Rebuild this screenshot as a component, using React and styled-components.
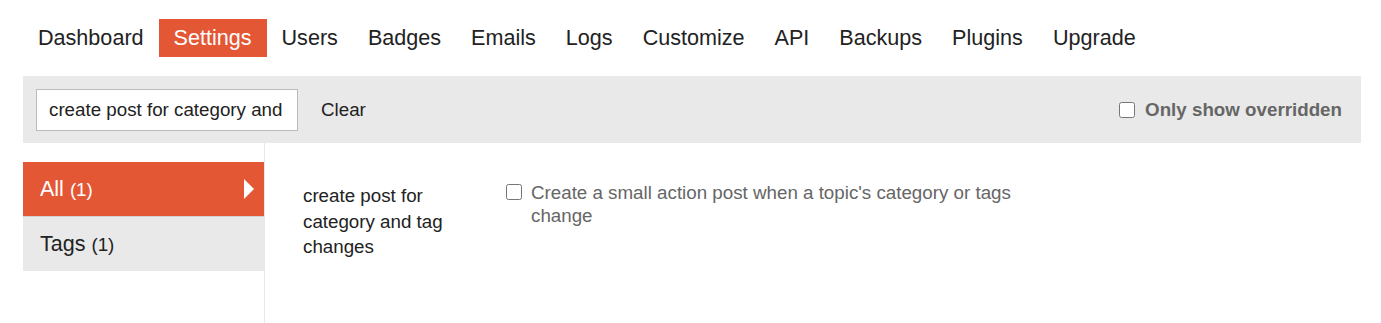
import React from 'react';
import styled, { createGlobalStyle } from 'styled-components';

const GlobalStyle = createGlobalStyle`
  body {
    margin: 0;
    background: #fff;
    font-family: "Liberation Sans", Arial, Helvetica, sans-serif;
    font-size: 18.75px;
    color: #222;
  }
`;

const Page = styled.div`
  padding: 19px 20px 0 23px;
`;

const NavPills = styled.ul`
  display: flex;
  list-style: none;
  margin: 0 0 19px;
  padding: 0;
`;

const Pill = styled.li`
  font-size: 21.58px;
  line-height: 24px;
  padding: 7px 15px;
  background: ${(p) => (p.active ? '#e45735' : 'transparent')};
  color: ${(p) => (p.active ? '#fff' : '#222')};
  cursor: pointer;
`;

const FilterBar = styled.div`
  display: flex;
  align-items: center;
  background: #e9e9e9;
  height: 67px;
  padding: 0 19px 0 13px;
  box-sizing: border-box;
`;

const SearchInput = styled.input`
  width: 262px;
  height: 42px;
  box-sizing: border-box;
  border: 1px solid #bbb;
  padding: 0 12px;
  font-family: inherit;
  font-size: 18.75px;
  color: #222;
  background: #fff;
  outline: none;
`;

const ClearButton = styled.button`
  border: none;
  background: transparent;
  font-family: inherit;
  font-size: 18.75px;
  color: #222;
  padding: 0;
  margin-left: 23px;
  cursor: pointer;
`;

const Toggle = styled.label`
  margin-left: auto;
  display: flex;
  align-items: center;
  gap: 10px;
  font-weight: bold;
  color: #666;
  font-size: 18.75px;
`;

const Check = styled.input`
  width: 16px;
  height: 16px;
  margin: 0;
  accent-color: #e45735;
`;

const Body = styled.div`
  display: flex;
  min-height: 180px;
`;

const SideNav = styled.ul`
  list-style: none;
  margin: 19px 0 0;
  padding: 0;
  width: 241px;
  align-self: flex-start;
`;

const SideItem = styled.li`
  display: flex;
  align-items: center;
  justify-content: space-between;
  height: 54px;
  padding: 0 10px 0 17px;
  font-size: 21.5px;
  background: ${(p) => (p.active ? '#e45735' : '#e9e9e9')};
  color: ${(p) => (p.active ? '#fff' : '#222')};
  border-bottom: ${(p) => (p.active ? '1px solid #d2d2d2' : 'none')};
`;

const Count = styled.span`
  font-size: 18.75px;
`;

const Arrow = styled.span`
  width: 0;
  height: 0;
  border-top: 10px solid transparent;
  border-bottom: 10px solid transparent;
  border-left: 10px solid #fff;
`;

const Content = styled.div`
  flex: 1;
  border-left: 1px solid #e9e9e9;
  padding: 38px 0 0 38px;
`;

const SettingRow = styled.div`
  display: grid;
  grid-template-columns: 203px 520px;
`;

const SettingLabel = styled.div`
  width: 170px;
  line-height: 25.5px;
  padding-top: 2px;
  color: #222;
`;

const SettingValue = styled.label`
  display: flex;
  align-items: flex-start;
  gap: 9px;
  color: #666;
  line-height: 23px;
`;

const ValueCheck = styled(Check)`
  margin-top: 3px;
  flex-shrink: 0;
`;

const navItems = ['Dashboard', 'Settings', 'Users', 'Badges', 'Emails', 'Logs', 'Customize', 'API', 'Backups', 'Plugins', 'Upgrade'];

export default function App() {
  return (
    <>
      <GlobalStyle />
      <Page>
        <NavPills>
          {navItems.map((item) => (
            <Pill key={item} active={item === 'Settings'}>{item}</Pill>
          ))}
        </NavPills>
        <FilterBar>
          <SearchInput defaultValue="create post for category and" />
          <ClearButton>Clear</ClearButton>
          <Toggle>
            <Check type="checkbox" />
            Only show overridden
          </Toggle>
        </FilterBar>
        <Body>
          <SideNav>
            <SideItem active>
              <span>All <Count>(1)</Count></span>
              <Arrow />
            </SideItem>
            <SideItem>
              <span>Tags <Count>(1)</Count></span>
            </SideItem>
          </SideNav>
          <Content>
            <SettingRow>
              <SettingLabel>create post for category and tag changes</SettingLabel>
              <SettingValue>
                <ValueCheck type="checkbox" />
                <span>Create a small action post when a topic's category or tags change</span>
              </SettingValue>
            </SettingRow>
          </Content>
        </Body>
      </Page>
    </>
  );
}
